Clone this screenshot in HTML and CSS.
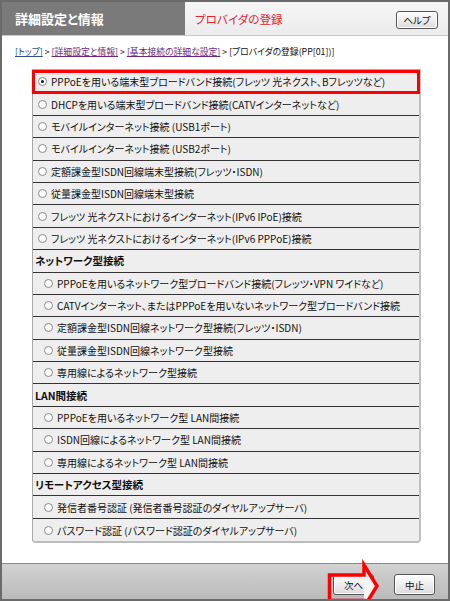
FILE: index.html
```html
<!DOCTYPE html>
<html lang="ja">
<head>
  <meta charset="UTF-8">
  <title>プロバイダの登録</title>
  <link rel="stylesheet" href="styles.css">
</head>
<body>

<div class="window">
  <header class="top">
    <div class="top-title">詳細設定と情報</div>
    <div class="top-page">
      <span class="page-name">プロバイダの登録</span>
      <button class="btn btn-help">ヘルプ</button>
    </div>
  </header>

  <main class="main">
    <p class="crumbs">
      <a class="link-top" href="#">[トップ]</a> &gt;
      <a class="link-seen" href="#">[詳細設定と情報]</a> &gt;
      <a class="link-seen" href="#">[基本接続の詳細な設定]</a> &gt;
      [プロバイダの登録(PP[01])]
    </p>

    <section class="panel">
      <!-- 端末型 -->
      <label class="opt selected"><span class="radio on"></span>PPPoEを用いる端末型ブロードバンド接続(フレッツ 光ネクスト、Bフレッツなど)</label>
      <label class="opt"><span class="radio"></span>DHCPを用いる端末型ブロードバンド接続(CATVインターネットなど)</label>
      <label class="opt"><span class="radio"></span>モバイルインターネット接続 (USB1ポート)</label>
      <label class="opt"><span class="radio"></span>モバイルインターネット接続 (USB2ポート)</label>
      <label class="opt"><span class="radio"></span>定額課金型ISDN回線端末型接続(フレッツ・ISDN)</label>
      <label class="opt"><span class="radio"></span>従量課金型ISDN回線端末型接続</label>
      <label class="opt"><span class="radio"></span>フレッツ 光ネクストにおけるインターネット(IPv6 IPoE)接続</label>
      <label class="opt"><span class="radio"></span>フレッツ 光ネクストにおけるインターネット(IPv6 PPPoE)接続</label>

      <div class="group">ネットワーク型接続</div>
      <label class="opt sub"><span class="radio"></span>PPPoEを用いるネットワーク型ブロードバンド接続(フレッツ・VPN ワイドなど)</label>
      <label class="opt sub"><span class="radio"></span>CATVインターネット、またはPPPoEを用いないネットワーク型ブロードバンド接続</label>
      <label class="opt sub"><span class="radio"></span>定額課金型ISDN回線ネットワーク型接続(フレッツ・ISDN)</label>
      <label class="opt sub"><span class="radio"></span>従量課金型ISDN回線ネットワーク型接続</label>
      <label class="opt sub"><span class="radio"></span>専用線によるネットワーク型接続</label>

      <div class="group">LAN間接続</div>
      <label class="opt sub"><span class="radio"></span>PPPoEを用いるネットワーク型 LAN間接続</label>
      <label class="opt sub"><span class="radio"></span>ISDN回線によるネットワーク型 LAN間接続</label>
      <label class="opt sub"><span class="radio"></span>専用線によるネットワーク型 LAN間接続</label>

      <div class="group">リモートアクセス型接続</div>
      <label class="opt sub"><span class="radio"></span>発信者番号認証 (発信者番号認証のダイヤルアップサーバ)</label>
      <label class="opt sub last"><span class="radio"></span>パスワード認証 (パスワード認証のダイヤルアップサーバ)</label>
    </section>
  </main>

  <footer class="foot">
    <button class="btn btn-foot">次へ</button>
    <button class="btn btn-foot">中止</button>
    <!-- red arrow marking the next button -->
    <svg class="mark" width="60" height="50" viewBox="0 0 60 50">
      <polygon points="38,5 51,26 38,47" fill="#f4f4f4"/>
      <polygon points="3.5,15 38,15 38,5 51,26 38,47 38,40.5 3.5,40.5" fill="none" stroke="#ff0000" stroke-width="3.5" stroke-linejoin="miter"/>
    </svg>
  </footer>
</div>

</body>
</html>
```

FILE: styles.css
```css
/* page frame */
body {
  margin: 0;
  font-family: "Noto Sans CJK JP", "Liberation Sans", sans-serif;
  font-feature-settings: "palt";
  color: #111;
}
.window {
  width: 450px;
  height: 601px;
  box-sizing: border-box;
  border: 2px solid #6a6a6a;
  display: flex;
  flex-direction: column;
  overflow: hidden;
  background-color: white;
}

/* title bar */
.top {
  display: flex;
  height: 33px;
  border-bottom: 1px solid #c8c8c8;
}
.top-title {
  width: 183px;
  background-color: #7a7a7a;
  color: white;
  font-size: 13px;
  font-weight: bold;
  line-height: 33px;
  padding-left: 13px;
  box-sizing: border-box;
}
.top-page {
  flex: 1;
  display: flex;
  align-items: center;
  justify-content: space-between;
  padding: 0 10px 0 10px;
  background: linear-gradient(#f6f6f6, #ebebeb);
}
.page-name {
  color: #e02430;
  font-size: 11.6px;
}

/* buttons */
.btn {
  font-family: inherit;
  font-feature-settings: "palt";
  color: #111;
  border: 1px solid #555;
  border-radius: 3px;
  background: linear-gradient(#ffffff, #dcdcdc);
  box-shadow: inset 0 0 0 1px #fff;
  padding: 0;
  cursor: pointer;
}
.btn-help {
  width: 42px;
  height: 18px;
  font-size: 9.5px;
  margin-top: 2px;
}
.btn-foot {
  width: 41px;
  height: 21px;
  font-size: 9.5px;
}

/* content */
.main {
  flex: 1;
  display: flex;
  flex-direction: column;
}
.crumbs {
  margin: 0;
  padding: 9px 0 0 13px;
  height: 14px;
  line-height: 14px;
  font-size: 8.8px;
  white-space: nowrap;
}
.crumbs a {
  text-decoration: underline;
}
.link-top {
  color: #2f4f8f;
}
.link-seen {
  color: #6a2a7c;
}

.panel {
  margin: 10px 0 0 30px;
  width: 386px;
  padding-top: 1px;
  background-color: #eeeeee;
  border: 1px solid #a8a8a8;
  border-right: 2px solid #c0c0c0;
  border-bottom: 2px solid #bcbcbc;
  border-radius: 0 0 4px 4px;
}
.opt, .group {
  display: flex;
  align-items: center;
  height: 22.4px;
  box-sizing: border-box;
  border-bottom: 1px solid #333;
  font-size: 10px;
  white-space: nowrap;
}
.opt {
  padding-left: 5px;
}
.opt.sub {
  padding-left: 11px;
}
.opt.last {
  border-bottom: none;
}
.group {
  padding-left: 2px;
  font-size: 10.5px;
  font-weight: bold;
}
.selected {
  outline: 3px solid #ff0000;
  outline-offset: -2px;
}
.radio {
  width: 9px;
  height: 9px;
  box-sizing: border-box;
  border: 1px solid #888;
  border-radius: 50%;
  background-color: white;
  margin-right: 4px;
  flex-shrink: 0;
  position: relative;
}
.radio.on::after {
  content: "";
  position: absolute;
  left: 2px;
  top: 2px;
  width: 3px;
  height: 3px;
  border-radius: 50%;
  background-color: #111;
}

/* bottom bar */
.foot {
  position: relative;
  height: 36px;
  border-top: 1px solid #8a8a8a;
  background: linear-gradient(#d2d2d2, #bababa);
  display: flex;
  justify-content: flex-end;
  align-items: flex-start;
  gap: 20px;
  padding: 10px 13px 0 0;
  box-sizing: border-box;
}
.mark {
  position: absolute;
  left: 324px;
  top: -4px;
  overflow: visible;
}
```
